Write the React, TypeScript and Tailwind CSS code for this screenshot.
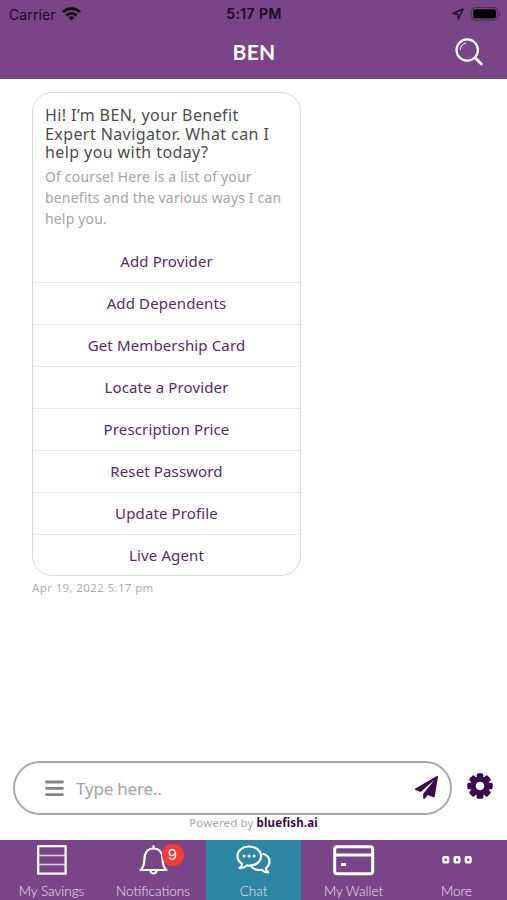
import type { ReactNode } from 'react'

const options = [
  'Add Provider',
  'Add Dependents',
  'Get Membership Card',
  'Locate a Provider',
  'Prescription Price',
  'Reset Password',
  'Update Profile',
  'Live Agent',
]

function StatusBar() {
  return (
    <div className="grid h-7 grid-cols-3 items-center pl-[9px] pr-[6px] text-[14px] text-[#160b1b]">
      <div className="flex items-center gap-[6px]">
        <span className="tracking-[0.1px]">Carrier</span>
        <svg className="mb-px" width="19" height="14" viewBox="0 0 19 14" fill="none" stroke="#08030a" strokeWidth="2.7">
          <path d="M1 5.1a12.2 12.2 0 0 1 17 0" />
          <path d="M4.2 8.5a7.6 7.6 0 0 1 10.6 0" />
          <path d="M9.5 13.6 6.5 10.7a4.4 4.4 0 0 1 6 0Z" fill="#08030a" stroke="none" />
        </svg>
      </div>
      <span className="pb-px pr-[2px] text-center font-semibold tracking-[0.4px]">5:17 PM</span>
      <div className="flex items-center justify-end gap-[7px]">
        <svg width="12" height="12" viewBox="0 0 12 12" fill="none" stroke="#241129" strokeWidth="1.5" strokeLinejoin="round">
          <path d="M11 1 1 5.4l4.7.9.8 4.7Z" />
        </svg>
        <svg className="mb-px" width="30" height="14" viewBox="0 0 30 14">
          <rect x="0.6" y="0.6" width="26" height="12.6" rx="3.6" fill="none" stroke="#4b2854" />
          <rect x="2.3" y="2.3" width="22.6" height="9.2" rx="2" fill="#000" />
          <path d="M28 5v4c1.8-.7 1.8-3.3 0-4Z" fill="#4b2854" />
        </svg>
      </div>
    </div>
  )
}

function Header() {
  return (
    <header className="h-[79px] shrink-0 bg-[#7a4586] font-['Inter',sans-serif]">
      <StatusBar />
      <div className="grid h-[48px] grid-cols-[1fr_auto_1fr] items-center pr-[23px]">
        <span />
        <h1 className="pl-[24px] font-['Lato',sans-serif] text-[21px] font-bold tracking-[0.3px] text-white">BEN</h1>
        <button className="justify-self-end" aria-label="Search">
          <svg width="30" height="30" viewBox="0 0 30 30" fill="none" stroke="#fff" strokeLinecap="round">
            <circle cx="13.2" cy="13" r="10.7" strokeWidth="2.2" />
            <path d="M6.3 12.5A7.3 7.3 0 0 1 11.8 6" strokeWidth="1" />
            <path d="m21.3 21 6 6" strokeWidth="2.8" />
          </svg>
        </button>
      </div>
    </header>
  )
}

function MessageCard() {
  return (
    <div className="w-[269px] overflow-hidden rounded-[20px] border border-[#dad8da] bg-white">
      <div className="h-[148px] whitespace-nowrap pl-[12px] pt-[13px]">
        <p className="text-[16px] leading-[18.5px] tracking-[0.41px] text-[#4c4c4c]">
          Hi! I’m BEN, your Benefit<br />
          Expert Navigator. What can I<br />
          help you with today?
        </p>
        <p className="mt-[4px] text-[14px] leading-[21px] tracking-[0.16px] text-[#a6a6a6]">
          Of course! Here is a list of your<br />
          benefits and the various ways I can<br />
          help you.
        </p>
      </div>
      {options.map(label => (
        <button
          key={label}
          className="block h-[42px] w-full border-b border-[#ebe9eb] text-center text-[15px] tracking-[0.13px] text-[#542c68] last:h-[40px] last:border-b-0"
        >
          {label}
        </button>
      ))}
    </div>
  )
}

function Composer() {
  return (
    <div className="pl-[13px] pr-[14px]">
      <div className="flex items-center justify-between">
        <div className="flex h-[54px] w-[439px] items-center rounded-full border-2 border-[#aaa] pl-[30px] pr-[12px]">
          <svg width="19" height="17" viewBox="0 0 19 17" stroke="#858585" strokeWidth="2.8" strokeLinecap="round">
            <path d="M1.5 2h16M1.5 8.3h16M1.5 14.6h16" />
          </svg>
          <span className="ml-[12px] flex-1 pt-px text-[17px] tracking-[-0.2px] text-[#a6a6a6]">Type here..</span>
          <svg className="mb-[2px]" width="23" height="23" viewBox="0 0 1792 1792" fill="#3a0b4f">
            <path d="M1764 11q33 24 27 64l-256 1536q-5 29-32 45-14 8-31 8-11 0-24-5l-453-185-242 295q-18 23-49 23-13 0-22-4-19-7-30.500-23.500t-11.500-36.500v-349l864-1059-1069 925-395-162q-37-14-40-55-2-40 32-59l1664-960q15-9 32-9 20 0 36 11z" />
          </svg>
        </div>
        <svg className="mb-[5px]" width="26" height="26" viewBox="0 0 26 26" fill="#3a0b4f">
          <rect x="9.7" y="0.3" width="6.6" height="25.4" rx="1.5" />
          <rect x="9.7" y="0.3" width="6.6" height="25.4" rx="1.5" transform="rotate(45 13 13)" />
          <rect x="9.7" y="0.3" width="6.6" height="25.4" rx="1.5" transform="rotate(90 13 13)" />
          <rect x="9.7" y="0.3" width="6.6" height="25.4" rx="1.5" transform="rotate(135 13 13)" />
          <circle cx="13" cy="13" r="9.6" />
          <circle cx="13" cy="13" r="4.3" fill="#fff" />
        </svg>
      </div>
      <p className="h-[25px] whitespace-nowrap pl-px text-center text-[11.5px] leading-[15px] tracking-[0.13px] text-[#aaa]">
        Powered by <b className="text-[#3a0b4f]">bluefish.ai</b>
      </p>
    </div>
  )
}

function Tab({ label, active, children }: { label: string; active?: boolean; children: ReactNode }) {
  return (
    <button className={`flex flex-col items-center ${active ? 'bg-[#2e86a5]' : ''}`}>
      <span className="flex h-[40px] items-center">{children}</span>
      <span className="whitespace-nowrap pt-px leading-[20px]">{label}</span>
    </button>
  )
}

function TabBar() {
  return (
    <nav className="grid h-[60px] shrink-0 grid-cols-[103px_100px_3px_95px_105px_101px] bg-[#7a4586] font-['Lato',sans-serif] text-[13.5px] font-light text-[#eee4f0]">
      <Tab label="My Savings">
        <svg width="30" height="30" viewBox="0 0 30 30" fill="none" stroke="#fff">
          <rect x="1.2" y="1.2" width="27.4" height="27.4" strokeWidth="2.2" />
          <path d="M2 10.5h26M2 19.5h26" strokeWidth="1.4" opacity="0.75" />
        </svg>
      </Tab>
      <Tab label="Notifications">
        <span className="relative">
          <svg width="29" height="30" viewBox="0 0 29 30" fill="none" stroke="#fff" strokeWidth="2.2" strokeLinecap="round" strokeLinejoin="round">
            <path d="M14.5 3.3V1.2M1.5 25h26c-3-2.5-3.8-5-3.9-10.5C23.5 7.5 20 3.5 14.5 3.5S5.5 7.5 5.4 14.5C5.3 20 4.5 22.5 1.5 25Z" />
            <path d="M11.5 26c.3 3.3 5.7 3.3 6 0" />
          </svg>
          <span className="absolute -top-[1px] left-[23px] flex size-[22px] items-center justify-center rounded-full bg-[#fb3b30] font-['Inter',sans-serif] text-[15px] font-normal text-white">9</span>
        </span>
      </Tab>
      <span />
      <Tab label="Chat" active>
        <svg width="35" height="30" viewBox="0 0 35 30" fill="none" stroke="#fff" strokeWidth="2.2" strokeLinecap="round" strokeLinejoin="round">
          <path d="M13 1.5C6.5 1.5 1.5 5.600 1.5 11c0 3.3 1.7 6 4.5 7.7 0 2-.8 3.2-2.3 4.3 3 .3 5.3-.8 7-2.6 8 1.2 14.3-3.2 14.3-9.4C25 5.6 19.5 1.5 13 1.5Z" />
          <path d="M27.500 9c4 1.2 6 4 6 7.500 0 3-1.400 5-3.500 6.500 0 2 .8 3 2.300 4.300-3 .2-5-.8-6.700-2.500-4.500.7-8.600-.7-10.600-3.800" />
          <path d="M8 11h.1M13 11h.1M18 11h.1" strokeWidth="3" />
        </svg>
      </Tab>
      <Tab label="My Wallet">
        <svg width="42" height="31" viewBox="0 0 42 31" fill="none" stroke="#fff" strokeWidth="3">
          <rect x="1.7" y="1.7" width="38" height="27" rx="2.5" />
          <path d="M2 10h38" />
          <path d="M8 19.5h5" />
        </svg>
      </Tab>
      <Tab label="More">
        <svg width="30" height="8" viewBox="0 0 30 8" fill="none" stroke="#fff" strokeWidth="2.4">
          <rect x="1.5" y="1.3" width="4.6" height="5" rx="0.5" />
          <rect x="12.7" y="1.3" width="4.6" height="5" rx="0.5" />
          <rect x="23.9" y="1.3" width="4.6" height="5" rx="0.5" />
        </svg>
      </Tab>
    </nav>
  )
}

export default function App() {
  return (
    <div className="flex h-[900px] w-[507px] flex-col overflow-hidden bg-white font-['Noto_Sans',sans-serif]">
      <Header />
      <main className="flex flex-1 flex-col justify-between">
        <div className="pl-[32px] pt-[13px]">
          <MessageCard />
          <p className="pt-[3px] text-[11.5px] leading-[18px] tracking-[0.37px] text-[#b0b0b0]">Apr 19, 2022 5:17 pm</p>
        </div>
        <Composer />
      </main>
      <TabBar />
    </div>
  )
}
